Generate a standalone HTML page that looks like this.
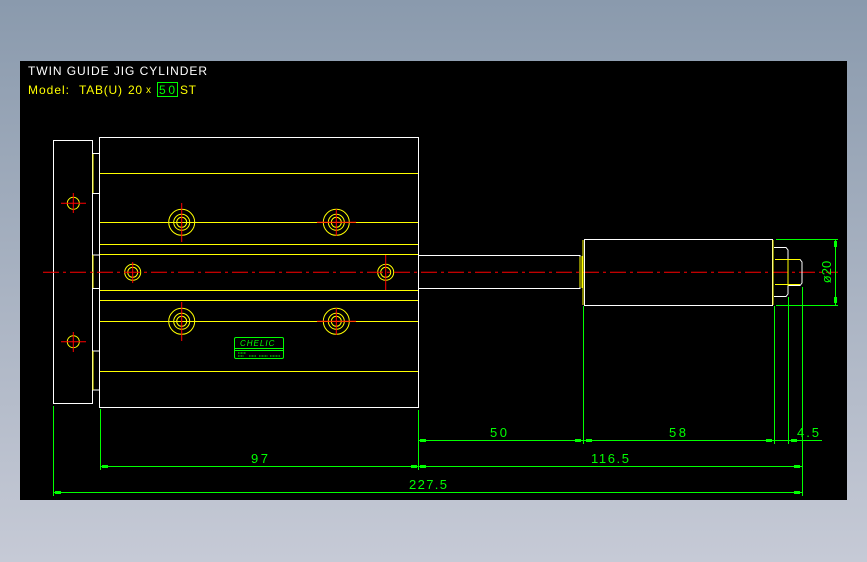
<!DOCTYPE html>
<html><head><style>
html,body{margin:0;padding:0;}
body{width:867px;height:562px;background:linear-gradient(#8a9aad,#c6cad6);position:relative;overflow:hidden;font-family:"Liberation Sans",sans-serif;}
svg{position:absolute;left:0;top:0;}
</style></head><body>
<svg width="867" height="562" viewBox="0 0 867 562">
<rect x="20" y="61" width="827" height="439" fill="#000"/>
<text x="28" y="75" fill="#fff" font-size="12" textLength="179" lengthAdjust="spacing">TWIN  GUIDE  JIG  CYLINDER</text>
<g fill="#ff0" font-size="12">
<text x="28" y="94" textLength="41" lengthAdjust="spacing">Model:</text>
<text x="79" y="94" textLength="43" lengthAdjust="spacing">TAB(U)</text>
<text x="128" y="94" textLength="14" lengthAdjust="spacing">20</text>
<text x="146" y="93" font-size="10">x</text>
<text x="180" y="94" textLength="16" lengthAdjust="spacing">ST</text>
</g>
<rect x="157.5" y="82.5" width="20" height="14" fill="none" stroke="#0f0" stroke-width="1"/>
<text x="159" y="94" fill="#0f0" font-size="12" textLength="16" lengthAdjust="spacing">50</text>
<g fill="none" stroke-width="1">
<path d="M53.5 140.5H92.5V403.5H53.5Z" stroke="#fff"/>
<path d="M92.5 153.5H99M92.5 193.5H99M92.5 255H99M92.5 288.5H99M92.5 351H99M92.5 390H99" stroke="#fff"/>
<path d="M93 154V193M93 255V288M93 351V390" stroke="#ff0"/>
<rect x="99.5" y="137.5" width="319" height="270" stroke="#fff"/>
<path d="M100 173.5H418M100 222.5H418M100 244.5H418M100 254.5H418M100 290.5H418M100 300.5H418M100 321.5H418M100 371.5H418" stroke="#ff0"/>
<g stroke="#ff0">
<circle cx="181.7" cy="222.3" r="13"/><circle cx="181.7" cy="222.3" r="8"/><circle cx="181.7" cy="222.3" r="5"/>
<circle cx="336.3" cy="222.3" r="13"/><circle cx="336.3" cy="222.3" r="8"/><circle cx="336.3" cy="222.3" r="5"/>
<circle cx="181.7" cy="321.3" r="13"/><circle cx="181.7" cy="321.3" r="8"/><circle cx="181.7" cy="321.3" r="5"/>
<circle cx="336.3" cy="321.3" r="13"/><circle cx="336.3" cy="321.3" r="8"/><circle cx="336.3" cy="321.3" r="5"/>
<circle cx="132.7" cy="272.3" r="8"/><circle cx="132.7" cy="272.3" r="5"/>
<circle cx="385.7" cy="272.3" r="8"/><circle cx="385.7" cy="272.3" r="5"/>
<circle cx="73.3" cy="203.3" r="6"/><circle cx="73.3" cy="341.7" r="6"/>
</g>
<g stroke="#f00">
<path d="M181.7 203V242M181.7 302V341M336.3 209V236M317 222.3H356M336.3 308V335M317 321.3H356M132.7 262V283M385.7 255V290M73.3 193V213M61 203.3H86M73.3 332V352M61 341.7H86"/>
<path d="M43 272.3H838" stroke-dasharray="16 4 3 4"/>
</g>
<path d="M419 255.5H580V288.5H419" stroke="#fff"/>
<path d="M580 257V287M582 256V288" stroke="#ff0"/>
<rect x="584.5" y="239.5" width="188" height="66" stroke="#fff"/>
<path d="M583 240V305M773 240V305" stroke="#ff0"/>
<path d="M774 247.5H786L788 250V294L786 296.5H774" stroke="#fff"/>
<path d="M788 259.5H800L802 262V283L800 285.5H788" stroke="#fff"/>
<path d="M775 259.5H800M775 284.5H800M788 259V286" stroke="#ff0"/>
<rect x="234.5" y="337.5" width="49" height="21" rx="1.5" stroke="#0f0"/>
<path d="M235 348.5H283M235 350.5H283" stroke="#0f0"/>
<text x="240" y="346" fill="#0f0" stroke="none" font-size="8" font-style="italic" letter-spacing="1">CHELIC</text>
<path d="M238 353H246M238 356H244M249 356H256M259 356H268M270 356H280" stroke="#0f0" stroke-dasharray="1 0.5"/>
<g stroke="#0f0">
<path d="M418.5 440.5H822M100.5 466.5H802M53.5 492.5H802"/>
<path d="M100.5 409V470M53.5 406V496M418.5 410V470M583.5 306V444M774.5 306V444M788.5 297V444M802.5 287V496"/>
<path d="M776 239.5H838M776 305.5H838M835.5 239V305"/>
</g>
<g fill="#0f0" stroke="none">
<rect x="420" y="439" width="6" height="3"/><rect x="575" y="439" width="6" height="3"/><rect x="586" y="439" width="6" height="3"/><rect x="766" y="439" width="6" height="3"/><rect x="791" y="439" width="6" height="3"/>
<rect x="102" y="465" width="6" height="3"/><rect x="411" y="465" width="6" height="3"/><rect x="420" y="465" width="6" height="3"/><rect x="794" y="465" width="6" height="3"/>
<rect x="55" y="491" width="6" height="3"/><rect x="794" y="491" width="6" height="3"/>
<rect x="834" y="241" width="3" height="6"/><rect x="834" y="297" width="3" height="6"/>
</g>
</g>
<g fill="#0f0" font-size="13">
<text x="490" y="437" textLength="17" lengthAdjust="spacing">50</text>
<text x="669" y="437" textLength="17" lengthAdjust="spacing">58</text>
<text x="797" y="437" textLength="22" lengthAdjust="spacing">4.5</text>
<text x="251" y="463" textLength="17" lengthAdjust="spacing">97</text>
<text x="591" y="463" textLength="38" lengthAdjust="spacing">116.5</text>
<text x="409" y="489" textLength="38" lengthAdjust="spacing">227.5</text>
<text transform="translate(831,272) rotate(-90)" text-anchor="middle">ø20</text>
</g>
</svg>
</body></html>
